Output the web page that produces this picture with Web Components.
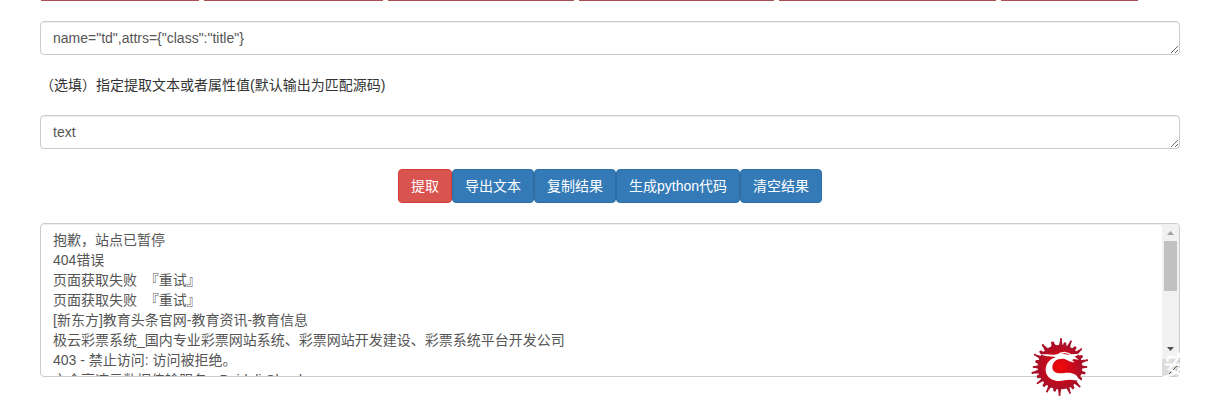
<!DOCTYPE html>
<html lang="zh-CN">
<head>
<meta charset="UTF-8">
<meta name="viewport" content="width=device-width, initial-scale=1">
<title>提取工具</title>
<style>
  body {
    margin: 0;
    background: #fff;
    color: #333;
    font: 14px/20px "Liberation Sans", "Noto Sans CJK SC", sans-serif;
  }
</style>
</head>
<body>
<extract-page></extract-page>

<script>
class ButtonEdges extends HTMLElement {
  constructor() {
    super();
    this.attachShadow({ mode: "open" });
  }

  connectedCallback() {
    const sizes = (this.getAttribute("sizes") || "").split(",");
    this.shadowRoot.innerHTML = `
      <style>
        :host {
          display: flex;
          gap: 5px;
          padding: 0 42px 0 1px;
        }
        span {
          flex-basis: 0;
          height: 1px;
          background: #ac4f50;
        }
      </style>
      ${sizes.map((s) => `<span style="flex-grow: ${s}"></span>`).join("")}
    `;
  }
}

class TextField extends HTMLElement {
  constructor() {
    super();
    this.attachShadow({ mode: "open" });
  }

  connectedCallback() {
    const rows = this.getAttribute("rows") || "1";
    const label = this.getAttribute("label") || "";
    const hidden = this.hasAttribute("hide-label") ? "hidden-label" : "";

    this.shadowRoot.innerHTML = `
      <style>
        :host {
          display: flex;
          flex-direction: column;
          gap: 20px;
        }
        .hidden-label {
          display: none;
        }
        textarea {
          display: block;
          box-sizing: border-box;
          width: 100%;
          margin: 0;
          padding: 6px 12px;
          border: 1px solid #ccc;
          border-radius: 4px;
          background: #fff;
          box-shadow: inset 0 1px 1px rgba(0, 0, 0, 0.075);
          color: #555;
          font: inherit;
          line-height: 20px;
          resize: vertical;
          overflow: auto;
          scrollbar-width: none;
        }
      </style>
      <label for="box" class="${hidden}">${label}</label>
      <textarea id="box" rows="${rows}" aria-label="${label}" spellcheck="false"></textarea>
    `;
    this.shadowRoot.querySelector("textarea").value = this.getAttribute("value") || "";
  }
}

class ScrollTrack extends HTMLElement {
  constructor() {
    super();
    this.attachShadow({ mode: "open" });
    this.shadowRoot.innerHTML = `
      <style>
        :host {
          display: flex;
          flex-direction: column;
          width: 17px;
          overflow: hidden;
          border-radius: 0 3px 3px 0;
          background: #f1f1f1;
          pointer-events: none;
        }
        svg {
          display: block;
          width: 17px;
          height: 17px;
        }
        .thumb {
          height: 50px;
          margin: 0 2px;
          background: #c1c1c1;
        }
        .rest {
          flex: 1;
        }
        .corner {
          background: #dcdcdc;
        }
      </style>
      <svg viewBox="0 0 17 17"><path d="M5 11L8.500 7L12 11Z" fill="#a3a3a3"/></svg>
      <div class="thumb"></div>
      <div class="rest"></div>
      <svg viewBox="0 0 17 17"><path d="M5 5H12L8.500 9Z" fill="#505050"/></svg>
      <svg class="corner" viewBox="0 0 17 17"><path d="M7 15L15 7M11 15L15 11" stroke="#555"/></svg>
    `;
  }
}

class ActionButton extends HTMLElement {
  constructor() {
    super();
    this.attachShadow({ mode: "open" });
    this.shadowRoot.innerHTML = `
      <style>
        :host {
          display: block;
          --fill: #337ab7;
          --edge: #2e6da4;
        }
        :host([kind="danger"]) {
          --fill: #d9534f;
          --edge: #d43f3a;
        }
        button {
          display: block;
          padding: 6px 12px;
          border: 1px solid var(--edge);
          border-radius: 4px;
          background: var(--fill);
          color: #fff;
          font: inherit;
          white-space: nowrap;
          cursor: pointer;
        }
      </style>
      <button type="button"><slot></slot></button>
    `;
  }
}

class WaterMark extends HTMLElement {
  constructor() {
    super();
    this.attachShadow({ mode: "open" });
  }

  connectedCallback() {
    // paint drips around the blob: angle, length, width
    const drips = [
      [2, 89, 6], [12, 76, 9], [23, 88, 6], [38, 78, 9], [50, 88, 6], [64, 76, 10],
      [76, 89, 6], [90, 84, 6], [104, 80, 8], [120, 76, 10], [135, 88, 6],
      [148, 78, 9], [159, 88, 6], [181, 89, 6], [193, 76, 9], [208, 88, 6],
      [221, 78, 9], [234, 88, 6], [246, 76, 10], [258, 89, 7], [270, 84, 6],
      [283, 76, 10], [296, 89, 6], [308, 78, 9], [322, 88, 7], [343, 80, 10]
    ];
    const lines = drips.map(([a, r, w]) => `
      <g transform="rotate(${a})" fill="#a90f27">
        <path d="M${-w} -60L${-w / 3} ${-(r - 5)}H${w / 3}L${w} -60Z"/>
        <circle cy="${-(r - 5)}" r="${w / 2}"/>
      </g>`).join("");

    this.shadowRoot.innerHTML = `
      <style>
        :host {
          display: flex;
          align-items: center;
          gap: 70px;
          color: #fff;
          font-size: 28px;
          line-height: 32px;
          font-style: italic;
          pointer-events: none;
        }
        svg {
          display: block;
          width: 60px;
          height: 60px;
        }
      </style>
      <svg viewBox="-90 -90 180 180" aria-hidden="true">
        <defs>
          <radialGradient id="paint">
            <stop offset="0" stop-color="#f00a08"/>
            <stop offset="0.45" stop-color="#d50715"/>
            <stop offset="1" stop-color="#a90f27"/>
          </radialGradient>
        </defs>
        ${lines}
        <circle r="67" fill="url(#paint)"/>
        <path fill="#fff" d="M-58 -38C-35 -40 -22 -35 -8 -38C8 -43 22 -34 34 -38L60 -40L44 -31L57 -22L40 -24L33 -15L14 -24C-8 -27 -22 -16 -23 0C-23 16 -8 21 13 18C34 14 50 21 55 34L66 43C44 40 31 36 14 40C-14 47 -41 35 -43 11C-44 -9 -31 -24 -13 -29C-26 -33 -41 -29 -58 -38Z"/>
        <path fill="none" stroke="#fff" stroke-width="4" d="M-10 -34C8 -49 27 -44 35 -34M20 -30L41 -14"/>
      </svg>
      <span><slot></slot></span>
    `;
  }
}

class ExtractPage extends HTMLElement {
  constructor() {
    super();
    this.attachShadow({ mode: "open" });

    const results = [
      "抱歉，站点已暂停",
      "404错误",
      "页面获取失败  『重试』",
      "页面获取失败  『重试』",
      "[新东方]教育头条官网-教育资讯-教育信息",
      "极云彩票系统_国内专业彩票网站系统、彩票网站开发建设、彩票系统平台开发公司",
      "403 - 禁止访问: 访问被拒绝。",
      "六合高速云数据传输服务 - Baiduli Cloud"
    ];

    this.shadowRoot.innerHTML = `
      <style>
        :host {
          display: block;
          padding: 0 40px 20px;
        }
        main {
          display: flex;
          flex-direction: column;
          gap: 20px;
        }
        .actions {
          display: flex;
          justify-content: center;
        }
        .output {
          position: relative;
        }
        scroll-track {
          position: absolute;
          top: 1px;
          right: 1px;
          bottom: 1px;
        }
        water-mark {
          position: absolute;
          right: -8px;
          bottom: -20px;
        }
      </style>
      <main>
        <button-edges sizes="158,179,186,194,217,137"></button-edges>
        <text-field label="匹配条件" hide-label value="name=&quot;td&quot;,attrs={&quot;class&quot;:&quot;title&quot;}"></text-field>
        <text-field label="（选填）指定提取文本或者属性值(默认输出为匹配源码)" value="text"></text-field>
        <div class="actions">
          <action-button kind="danger">提取</action-button>
          <action-button>导出文本</action-button>
          <action-button>复制结果</action-button>
          <action-button>生成python代码</action-button>
          <action-button>清空结果</action-button>
        </div>
        <div class="output">
          <text-field label="结果" hide-label rows="7" value="${results.join("\n")}"></text-field>
          <scroll-track></scroll-track>
          <water-mark>安</water-mark>
        </div>
      </main>
    `;
  }
}

customElements.define("button-edges", ButtonEdges);
customElements.define("text-field", TextField);
customElements.define("scroll-track", ScrollTrack);
customElements.define("action-button", ActionButton);
customElements.define("water-mark", WaterMark);
customElements.define("extract-page", ExtractPage);
</script>
</body>
</html>
